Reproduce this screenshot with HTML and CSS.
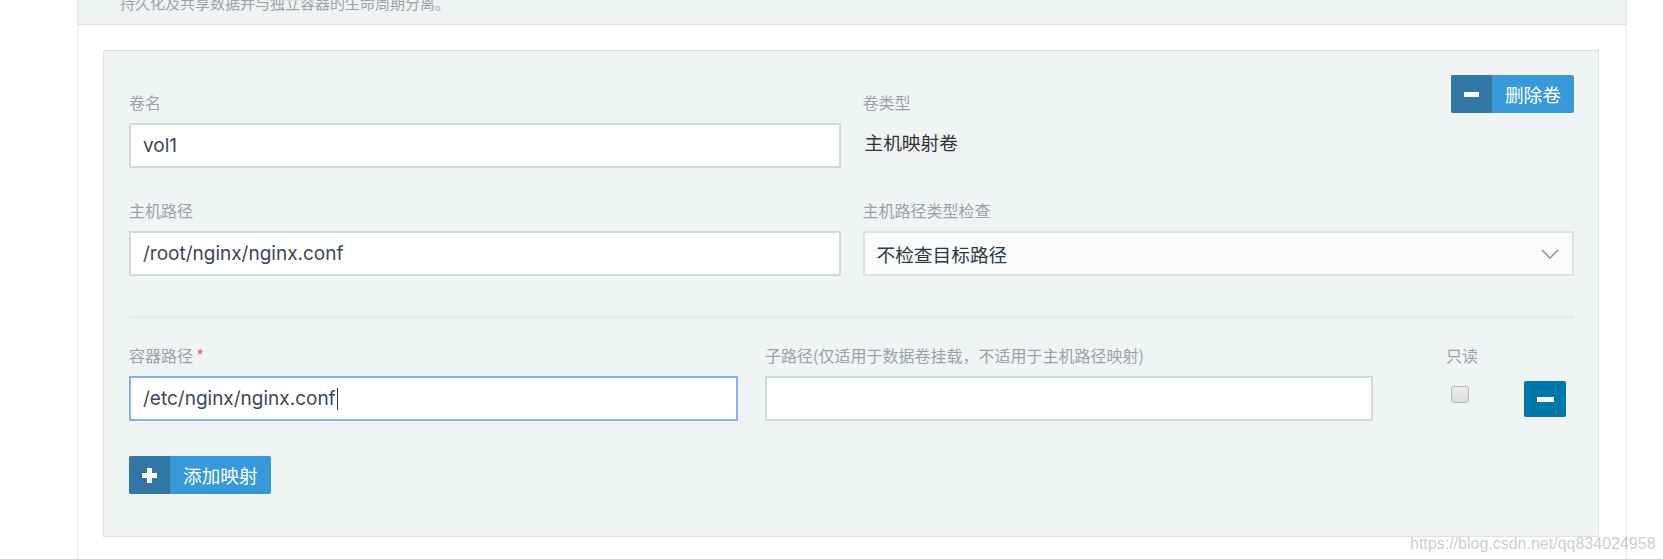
FILE: index.html
```html
<!DOCTYPE html>
<html lang="zh-CN">
<head>
    <meta charset="UTF-8">
    <title>存储卷</title>
    <link rel="stylesheet" href="styles.css">
</head>
<body>
    <div class="card">
        <div class="card-desc">
            <p>持久化及共享数据并与独立容器的生命周期分离。</p>
        </div>

        <div class="card-body">
            <div class="volume">
                <!-- volume name / type -->
                <div class="grid-2">
                    <div class="field">
                        <div class="field-head"><label>卷名</label></div>
                        <input class="text-input" type="text" value="vol1">
                    </div>
                    <div class="field">
                        <div class="field-head">
                            <label>卷类型</label>
                            <button class="btn-split">
                                <span class="btn-icon">
                                    <svg width="15" height="15" viewBox="0 0 15 15"><rect x="0" y="5" width="15" height="5" fill="#fff"/></svg>
                                </span>
                                <span class="btn-text">删除卷</span>
                            </button>
                        </div>
                        <div class="static-value">主机映射卷</div>
                    </div>
                </div>

                <!-- host path -->
                <div class="grid-2 row-host">
                    <div class="field">
                        <label>主机路径</label>
                        <input class="text-input" type="text" value="/root/nginx/nginx.conf">
                    </div>
                    <div class="field">
                        <label>主机路径类型检查</label>
                        <div class="select-box">
                            <span>不检查目标路径</span>
                            <svg width="18" height="10" viewBox="0 0 18 10"><path d="M1 1 L9 9 L17 1" fill="none" stroke="#8c989e" stroke-width="1.6"/></svg>
                        </div>
                    </div>
                </div>

                <div class="divider"></div>

                <!-- mounts -->
                <div class="mount-row">
                    <div class="field">
                        <label>容器路径 <span class="req">*</span></label>
                        <div class="text-input focused"><span>/etc/nginx/nginx.conf</span><span class="caret"></span></div>
                    </div>
                    <div class="field">
                        <label>子路径(仅适用于数据卷挂载，不适用于主机路径映射)</label>
                        <input class="text-input" type="text" value="">
                    </div>
                    <div class="field readonly">
                        <label>只读</label>
                        <span class="checkbox"></span>
                    </div>
                    <div class="mount-remove">
                        <button class="btn-remove">
                            <svg width="17" height="5" viewBox="0 0 17 5"><rect x="0" y="0" width="17" height="5" fill="#fff"/></svg>
                        </button>
                    </div>
                </div>

                <button class="btn-split btn-add">
                    <span class="btn-icon">
                        <svg width="15" height="15" viewBox="0 0 15 15"><rect x="0" y="5" width="15" height="5" fill="#fff"/><rect x="5" y="0" width="5" height="15" fill="#fff"/></svg>
                    </span>
                    <span class="btn-text">添加映射</span>
                </button>
            </div>
        </div>
    </div>

    <div class="watermark">https://blog.csdn.net/qq834024958</div>
</body>
</html>
```

FILE: styles.css
```css
* {
    box-sizing: border-box;
    margin: 0;
    padding: 0;
}

body {
    position: relative;
    height: 559px;
    overflow: hidden;
    background: #ffffff;
    font-family: "Noto Sans CJK SC", sans-serif;
    color: #333;
}

.card {
    width: 1550px;
    margin-left: 77px;
    border-left: 1px solid #e3e8ea;
    border-right: 1px solid #e3e8ea;
    padding-bottom: 40px;
}

.card-desc {
    height: 25px;
    overflow: hidden;
    background: #f0f3f4;
    border-bottom: 1px solid #dce3e6;
    padding-left: 42px;
}

.card-desc p {
    margin-top: -8px;
    font-size: 15px;
    line-height: 22px;
    color: #9aa3a8;
}

.card-body {
    padding: 25px 27px 0 25px;
}

.volume {
    background: #f0f4f5;
    border: 1px solid #dbe2e5;
    padding: 24px 24px 42px 25px;
}

.grid-2 {
    display: grid;
    grid-template-columns: 1fr 1fr;
    column-gap: 22px;
}

.row-host {
    margin-top: 31px;
}

label {
    display: block;
    font-size: 16px;
    line-height: 22px;
    color: #9aa2a7;
    margin-bottom: 10px;
}

.field-head {
    display: flex;
    justify-content: space-between;
    align-items: flex-end;
    min-height: 38px;
    margin-bottom: 10px;
}

.field-head label {
    margin-bottom: 0;
}

.text-input {
    display: block;
    width: 100%;
    height: 45px;
    padding: 0 12px;
    border: 2px solid #d2dadd;
    border-radius: 0;
    background: #fff;
    font-family: "Inter", "Noto Sans CJK SC", sans-serif;
    font-size: 19px;
    color: #3b4856;
    outline: none;
}

div.text-input {
    display: flex;
    align-items: center;
}

.text-input.focused {
    border-color: #88b0e6;
}

.caret {
    display: inline-block;
    width: 1px;
    height: 22px;
    margin-left: 1px;
    background: #2a3440;
}

.static-value {
    font-size: 18.7px;
    line-height: 37px;
    color: #333;
    padding-left: 2px;
}

.select-box {
    display: flex;
    justify-content: space-between;
    align-items: center;
    height: 45px;
    padding: 0 13px 0 12px;
    border: 2px solid #dde3e5;
    background: #fafcfc;
    font-size: 18.7px;
    color: #2d3843;
}

.divider {
    margin-top: 40px;
    height: 3px;
    border-top: 1px solid #dbe1e4;
    border-bottom: 1px solid #e3e8ea;
    margin-bottom: 25px;
}

.mount-row {
    display: grid;
    grid-template-columns: 609px 608px 1fr 42px;
    column-gap: 27px;
    padding-right: 8px;
}

.req {
    color: #e25a4f;
}

.readonly {
    padding-left: 46px;
}

.checkbox {
    display: block;
    width: 18px;
    height: 17px;
    margin: 20px 0 0 5px;
    border: 1px solid #b3b6b8;
    border-radius: 3px;
    background: linear-gradient(#ececec, #dedede);
}

.mount-remove {
    padding-top: 37px;
}

.btn-remove {
    display: flex;
    align-items: center;
    justify-content: center;
    width: 42px;
    height: 36px;
    border: none;
    border-radius: 2px;
    background: #0077a9;
    cursor: pointer;
}

.btn-split {
    display: flex;
    height: 38px;
    border: none;
    border-radius: 2px;
    overflow: hidden;
    background: #3799da;
    cursor: pointer;
    font-family: "Noto Sans CJK SC", sans-serif;
}

.btn-icon {
    display: flex;
    align-items: center;
    justify-content: center;
    width: 41px;
    height: 38px;
    background: #3276a6;
}

.btn-text {
    padding: 0 13px;
    font-size: 18.7px;
    line-height: 38px;
    color: #fff;
}

.btn-add {
    margin-top: 35px;
}

.watermark {
    position: absolute;
    left: 1410px;
    top: 535px;
    font-family: "Liberation Sans", sans-serif;
    font-size: 16px;
    color: rgba(140, 140, 140, 0.45);
}
```
